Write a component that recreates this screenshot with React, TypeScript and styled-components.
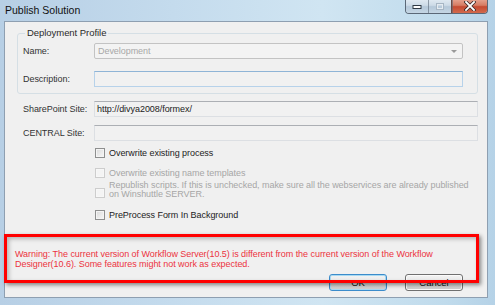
import React from "react";
import styled, { createGlobalStyle } from "styled-components";

const Global = createGlobalStyle`
  html, body { margin: 0; padding: 0; background: #c5dbec; }
  body { width: 495px; height: 305px; overflow: hidden; font-family: "Liberation Sans", Arial, sans-serif; }
`;

const Window = styled.div`
  width: 495px;
  height: 305px;
  box-sizing: border-box;
  display: flex;
  flex-direction: column;
  padding: 0 7px 7px 4px;
  background: linear-gradient(90deg, #b7cfe5 0%, #c4dbed 35%, #d0e5f2 65%, #c0dbec 90%, #b5d2e7 100%);
`;

const TitleBar = styled.div`
  height: 21px;
  flex: none;
  display: flex;
  align-items: flex-start;
  justify-content: space-between;
`;

const Title = styled.div`
  margin: 4px 0 0 1px;
  font-size: 10.5px;
  line-height: 13px;
  color: #111;
`;

const Caption = styled.div`
  display: flex;
  height: 14px;
  margin-top: -1px;
  border: 1px solid #5b6877;
  border-top: none;
  border-radius: 0 0 4px 4px;
  overflow: hidden;
`;

const CapBtn = styled.div<{ $w: number; $close?: boolean }>`
  width: ${(p) => p.$w}px;
  display: flex;
  align-items: center;
  justify-content: center;
  box-sizing: border-box;
  border-left: ${(p) => (p.$close ? "1px solid #6b4a44" : "none")};
  background: ${(p) =>
    p.$close
      ? "linear-gradient(180deg, #e6a693 0%, #d67c63 45%, #c54a31 55%, #d26a4d 100%)"
      : "linear-gradient(180deg, #e2ebf3 0%, #cddbe7 45%, #b5c8d9 55%, #c5d6e4 100%)"};
  & + & { box-shadow: inset 1px 0 0 rgba(90, 104, 119, 0.6); }
`;

const Client = styled.div`
  position: relative;
  flex: 1;
  display: flex;
  flex-direction: column;
  background: #f0f0f0;
  border: 1px solid #8e9fb1;
  padding: 5px 9px 6px 12px;
  font-size: 9px;
  letter-spacing: -0.05px;
`;

const Group = styled.fieldset`
  margin: 0;
  padding: 4px 14px 6px 5px;
  border: 1px solid #d5dfe5;
  border-radius: 3px;
  display: flex;
  flex-direction: column;
  gap: 12px;
`;

const Legend = styled.legend`
  padding: 0 2px;
  margin-left: 2px;
  font-size: 9.5px;
  line-height: 12px;
  color: #2a2a2a;
`;

const Row = styled.div<{ $inset: number; $top: number }>`
  display: grid;
  grid-template-columns: 71px 1fr;
  align-items: center;
  margin-top: ${(p) => p.$top}px;
  padding-left: ${(p) => p.$inset}px;
`;

const Label = styled.div`
  color: #333;
  white-space: nowrap;
`;

const Input = styled.div<{ $focus?: boolean }>`
  height: 16px;
  box-sizing: border-box;
  border: 1px solid ${(p) => (p.$focus ? "#b7d2ea" : "#dcdfe3")};
  border-top-color: ${(p) => (p.$focus ? "#8fb4d6" : "#acafb4")};
  background: #f1f1f1;
  display: flex;
  align-items: center;
  padding-left: 2px;
  color: #222;
`;

const Combo = styled.div`
  height: 16px;
  box-sizing: border-box;
  border: 1px solid #c3c3c3;
  border-radius: 2px;
  background: #f3f3f3;
  display: flex;
  align-items: center;
  justify-content: space-between;
  padding: 0 5px 0 3px;
  color: #a8a8a8;
`;

const Arrow = styled.div`
  width: 0;
  height: 0;
  border-left: 3px solid transparent;
  border-right: 3px solid transparent;
  border-top: 3px solid #9a9a9a;
`;

const CheckRow = styled.label<{ $top: number; $disabled?: boolean }>`
  display: flex;
  align-items: center;
  gap: 4px;
  margin: ${(p) => p.$top}px 0 0 78px;
  line-height: 9px;
  min-height: 12px;
  color: ${(p) => (p.$disabled ? "#a6a6a6" : "#222")};
`;

const Box = styled.span<{ $disabled?: boolean; $drop?: number }>`
  flex: none;
  width: 10px;
  height: 10px;
  margin-top: ${(p) => p.$drop ?? 0}px;
  box-sizing: border-box;
  border: 1px solid ${(p) => (p.$disabled ? "#cdcdcd" : "#8e8f8f")};
  background: ${(p) =>
    p.$disabled
      ? "#f4f4f4"
      : "linear-gradient(135deg, #d9d9d9 0%, #ececec 60%, #f6f6f6 100%)"};
  box-shadow: inset 0 0 0 1px ${(p) => (p.$disabled ? "#f7f7f7" : "#f4f4f4")};
`;

const Warning = styled.div`
  margin: 28px 0 0 -2px;
  line-height: 10px;
  color: #ec3340;
`;

const Buttons = styled.div`
  margin-top: auto;
  display: flex;
  justify-content: flex-end;
  gap: 18px;
  padding-right: 15px;
`;

const Button = styled.div<{ $default?: boolean }>`
  width: 58px;
  height: 17px;
  box-sizing: border-box;
  border: 1px solid ${(p) => (p.$default ? "#3c8ccb" : "#707070")};
  border-radius: 3px;
  background: linear-gradient(180deg, #f2f2f2 0%, #ebebeb 50%, #dddddd 51%, #cfcfcf 100%);
  box-shadow: inset 0 0 0 1px ${(p) => (p.$default ? "#a8daf3" : "#fbfbfb")};
  display: flex;
  align-items: center;
  justify-content: center;
  font-size: 9.5px;
  color: #111;
`;

const Highlight = styled.div`
  position: absolute;
  left: -1px;
  top: 212px;
  width: 475px;
  height: 49px;
  box-sizing: border-box;
  border: 3px solid #ff0000;
  box-shadow: 2px 2px 4px rgba(0, 0, 0, 0.45), inset 2px 2px 4px rgba(0, 0, 0, 0.25);
  pointer-events: none;
`;

export default function App() {
  return (
    <>
      <Global />
      <Window>
        <TitleBar>
          <Title>Publish Solution</Title>
          <Caption>
            <CapBtn $w={22}>
              <svg width="10" height="8" viewBox="0 0 10 8">
                <rect x="1" y="3.5" width="8" height="3" fill="#fff" stroke="#2f3a45" strokeWidth="1" />
              </svg>
            </CapBtn>
            <CapBtn $w={23}>
              <svg width="10" height="9" viewBox="0 0 10 9">
                <rect x="1.5" y="1.5" width="7" height="6" fill="none" stroke="#a7b6c4" strokeWidth="1" />
                <rect x="2.5" y="2.5" width="5" height="4" fill="none" stroke="#e4ebf1" strokeWidth="1" />
              </svg>
            </CapBtn>
            <CapBtn $w={36} $close>
              <svg width="12" height="10" viewBox="0 0 12 10">
                <path d="M2 1 L10 9 M10 1 L2 9" stroke="#3a2a28" strokeWidth="3.4" strokeLinecap="square" />
                <path d="M2 1 L10 9 M10 1 L2 9" stroke="#ffffff" strokeWidth="1.8" strokeLinecap="square" />
              </svg>
            </CapBtn>
          </Caption>
        </TitleBar>
        <Client>
          <Group>
            <Legend>Deployment Profile</Legend>
            <Row $inset={0} $top={0}>
              <Label>Name:</Label>
              <Combo>
                <span>Development</span>
                <Arrow />
              </Combo>
            </Row>
            <Row $inset={0} $top={0}>
              <Label>Description:</Label>
              <Input $focus />
            </Row>
          </Group>
          <Row $inset={6} $top={7}>
            <Label>SharePoint Site:</Label>
            <Input>http://divya2008/formex/</Input>
          </Row>
          <Row $inset={6} $top={8}>
            <Label>CENTRAL Site:</Label>
            <Input />
          </Row>
          <CheckRow $top={6}>
            <Box />
            <span>Overwrite existing process</span>
          </CheckRow>
          <CheckRow $top={8} $disabled>
            <Box $disabled />
            <span>Overwrite existing name templates</span>
          </CheckRow>
          <CheckRow $top={2} $disabled>
            <Box $disabled $drop={6} />
            <span>
              Republish scripts. If this is unchecked, make sure all the webservices are already published
              <br />
              on Winshuttle SERVER.
            </span>
          </CheckRow>
          <CheckRow $top={10}>
            <Box />
            <span>PreProcess Form In Background</span>
          </CheckRow>
          <Warning>
            Warning: The current version of Workflow Server(10.5) is different from the current version of the Workflow
            <br />
            Designer(10.6). Some features might not work as expected.
          </Warning>
          <Buttons>
            <Button $default>OK</Button>
            <Button>Cancel</Button>
          </Buttons>
          <Highlight />
        </Client>
      </Window>
    </>
  );
}
